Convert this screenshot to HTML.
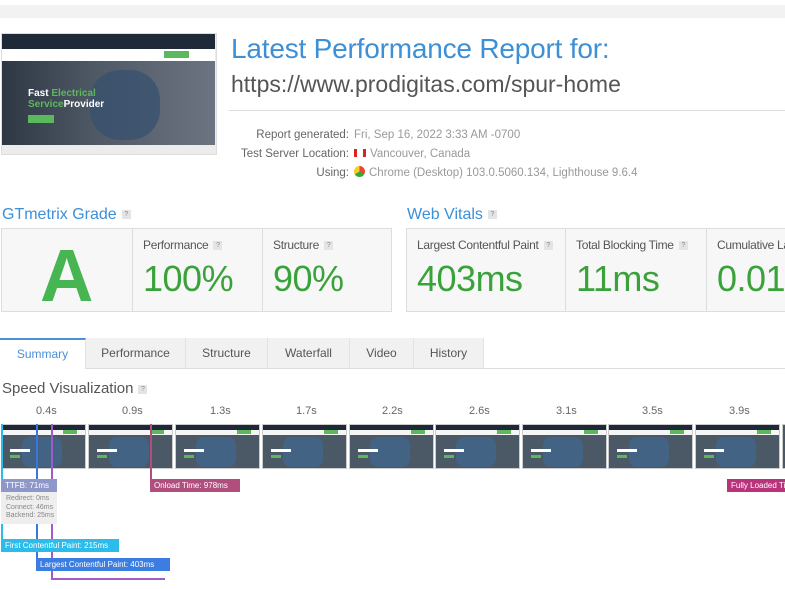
<!DOCTYPE html>
<html><head><meta charset="utf-8"><style>
*{margin:0;padding:0;box-sizing:border-box}
body{width:785px;height:589px;overflow:hidden;background:#fff;font-family:"Liberation Sans",sans-serif;position:relative;color:#555}
.a{position:absolute;white-space:nowrap}
.q{display:inline-block;width:9px;height:9px;background:#e4e4e4;color:#888;font-size:7px;line-height:9px;text-align:center;vertical-align:middle;margin-left:5px}
.box{position:absolute;border:1px solid #ddd;background:#f7f7f7;overflow:hidden}
.cell{position:absolute;top:0;bottom:0;border-right:1px solid #ddd;overflow:hidden}
.lbl{position:absolute;left:10px;top:9px;font-size:12px;color:#555;letter-spacing:-0.3px;white-space:nowrap}
.val{position:absolute;left:10px;top:29px;font-size:36px;color:#3aa23a;letter-spacing:-0.5px;white-space:nowrap}
.tab{position:absolute;top:338px;height:30px;background:#f1f1f1;border-right:1px solid #e2e2e2;font-size:12px;color:#555;text-align:center;line-height:30px}
.fr{position:absolute;top:424px;width:85px;height:45px;background:#4b5866;border:1px solid #ccc;overflow:hidden}
.fr i{position:absolute;left:0;right:0;top:0;height:5px;background:#1e2836}
.fr b{position:absolute;left:0;right:0;top:5px;height:5px;background:#f5f5f5}
.fr u{position:absolute;right:8px;top:5px;width:14px;height:4px;background:#5cb85c}
.fr s{position:absolute;left:20px;top:12px;width:40px;height:30px;background:#3d6a9a;opacity:.6;border-radius:8px}
.fr em{position:absolute;left:8px;top:24px;width:20px;height:3px;background:#fff}
.fr strong{position:absolute;left:8px;top:30px;width:10px;height:3px;background:#5cb85c}
.t{position:absolute;top:405px;font-size:11px;color:#666}
.tag{position:absolute;height:13px;font-size:8px;color:#fff;line-height:13px;padding:0 4px;white-space:nowrap;overflow:hidden}
</style></head><body>
<div class="a" style="left:0;top:5px;width:785px;height:13px;background:#f2f2f2"></div>
<div class="a" style="left:1px;top:33px;width:216px;height:122px;border:1px solid #ddd;background:#ececec"></div>
<div class="a" style="left:2px;top:34px;width:213px;height:15px;background:#1f2a38"></div>
<div class="a" style="left:2px;top:49px;width:213px;height:12px;background:#fff"></div>
<div class="a" style="left:164px;top:51px;width:25px;height:7px;background:#5cb85c"></div>
<div class="a" style="left:2px;top:61px;width:213px;height:84px;background:linear-gradient(90deg,#2e3744 0%,#505a66 45%,#6b7480 100%)"></div>
<div class="a" style="left:90px;top:70px;width:70px;height:70px;background:#34506f;border-radius:30px;opacity:.7"></div>
<div class="a" style="left:28px;top:88px;font-size:10px;font-weight:bold;color:#fff;line-height:11px">Fast <span style="color:#5cb85c">Electrical</span><br><span style="color:#5cb85c">Service</span>Provider</div>
<div class="a" style="left:28px;top:115px;width:26px;height:8px;background:#5cb85c"></div>
<div class="a" style="left:231px;top:33px;font-size:28px;color:#3d8fd6;letter-spacing:-0.2px">Latest Performance Report for:</div>
<div class="a" style="left:231px;top:71px;font-size:23px;color:#555">https://www.prodigitas.com/spur-home</div>
<div class="a" style="left:229px;top:110px;width:556px;height:1px;background:#ddd"></div>
<div class="a" style="left:200px;top:126px;width:149px;text-align:right;font-size:11.5px;color:#666;line-height:19px">Report generated:<br>Test Server Location:<br>Using:</div>
<div class="a" style="left:354px;top:126px;font-size:11.5px;color:#999;line-height:19px">Fri, Sep 16, 2022 3:33 AM -0700<br><span style="display:inline-block;width:12px;height:8px;background:linear-gradient(90deg,#d22 0 3px,#fff 3px 9px,#d22 9px);margin-right:4px;vertical-align:0"></span>Vancouver, Canada<br><span style="display:inline-block;width:11px;height:11px;border-radius:50%;background:conic-gradient(#e43 0 120deg,#3a3 120deg 240deg,#fc2 240deg);margin-right:4px;vertical-align:-1px"></span>Chrome (Desktop) 103.0.5060.134, Lighthouse 9.6.4</div>
<div class="a" style="left:2px;top:206px;font-size:16px;color:#3d8fd6">GTmetrix Grade<span class="q">?</span></div>
<div class="box" style="left:1px;top:228px;width:391px;height:84px">
 <div class="cell" style="left:0;width:131px"><div class="a" style="left:38px;top:4px;font-size:74px;font-weight:bold;color:#47b552">A</div></div>
 <div class="cell" style="left:131px;width:130px"><div class="lbl">Performance<span class="q">?</span></div><div class="val">100%</div></div>
 <div class="cell" style="left:261px;width:130px;border:none"><div class="lbl">Structure<span class="q">?</span></div><div class="val">90%</div></div>
</div>
<div class="a" style="left:407px;top:206px;font-size:16px;color:#3d8fd6">Web Vitals<span class="q">?</span></div>
<div class="box" style="left:406px;top:228px;width:390px;height:84px">
 <div class="cell" style="left:0;width:159px"><div class="lbl">Largest Contentful Paint<span class="q">?</span></div><div class="val">403ms</div></div>
 <div class="cell" style="left:159px;width:141px"><div class="lbl">Total Blocking Time<span class="q">?</span></div><div class="val">11ms</div></div>
 <div class="cell" style="left:300px;width:90px;border:none"><div class="lbl">Cumulative Layout Shift</div><div class="val">0.01</div></div>
</div>
<div class="a" style="left:0;top:368px;width:785px;height:1px;background:#ddd"></div>
<div class="tab" style="left:0;width:86px;background:#fff;border-top:2px solid #4a90d9;color:#4a90d9;height:31px;line-height:28px">Summary</div>
<div class="tab" style="left:86px;width:100px">Performance</div>
<div class="tab" style="left:186px;width:82px">Structure</div>
<div class="tab" style="left:268px;width:82px">Waterfall</div>
<div class="tab" style="left:350px;width:64px">Video</div>
<div class="tab" style="left:414px;width:70px">History</div>
<div class="a" style="left:2px;top:380px;font-size:15px;color:#555">Speed Visualization<span class="q">?</span></div>
<div class="t" style="left:36px">0.4s</div><div class="t" style="left:122px">0.9s</div><div class="t" style="left:210px">1.3s</div><div class="t" style="left:296px">1.7s</div><div class="t" style="left:382px">2.2s</div><div class="t" style="left:469px">2.6s</div><div class="t" style="left:556px">3.1s</div><div class="t" style="left:642px">3.5s</div><div class="t" style="left:729px">3.9s</div>
<div class="fr" style="left:1px"><i></i><b></b><u></u><s></s><em></em><strong></strong></div>
<div class="fr" style="left:88px"><i></i><b></b><u></u><s></s><em></em><strong></strong></div>
<div class="fr" style="left:175px"><i></i><b></b><u></u><s></s><em></em><strong></strong></div>
<div class="fr" style="left:262px"><i></i><b></b><u></u><s></s><em></em><strong></strong></div>
<div class="fr" style="left:349px"><i></i><b></b><u></u><s></s><em></em><strong></strong></div>
<div class="fr" style="left:435px"><i></i><b></b><u></u><s></s><em></em><strong></strong></div>
<div class="fr" style="left:522px"><i></i><b></b><u></u><s></s><em></em><strong></strong></div>
<div class="fr" style="left:608px"><i></i><b></b><u></u><s></s><em></em><strong></strong></div>
<div class="fr" style="left:695px"><i></i><b></b><u></u><s></s><em></em><strong></strong></div>
<div class="fr" style="left:782px"></div>
<div class="a" style="left:1px;top:424px;width:2px;height:116px;background:#2bbcea"></div>
<div class="a" style="left:36px;top:424px;width:2px;height:136px;background:#3b76dc"></div>
<div class="a" style="left:51px;top:424px;width:2px;height:156px;background:#a259c9"></div>
<div class="a" style="left:51px;top:578px;width:114px;height:2px;background:#a259c9"></div>
<div class="a" style="left:150px;top:424px;width:2px;height:56px;background:#b04f7e"></div>
<div class="a" style="left:1px;top:492px;width:56px;height:32px;background:#eee;font-size:7px;color:#888;padding:3px 5px;line-height:8.5px">Redirect: 0ms<br>Connect: 46ms<br>Backend: 25ms</div>
<div class="tag" style="left:1px;top:479px;width:56px;background:#8d97c9">TTFB: 71ms</div>
<div class="tag" style="left:150px;top:479px;width:90px;background:#b04f7e">Onload Time: 978ms</div>
<div class="tag" style="left:727px;top:479px;width:60px;background:#b8337a">Fully Loaded Time</div>
<div class="tag" style="left:1px;top:539px;width:118px;background:#2bbcea">First Contentful Paint: 215ms</div>
<div class="tag" style="left:36px;top:558px;width:134px;background:#3b7de0">Largest Contentful Paint: 403ms</div>
</body></html>
